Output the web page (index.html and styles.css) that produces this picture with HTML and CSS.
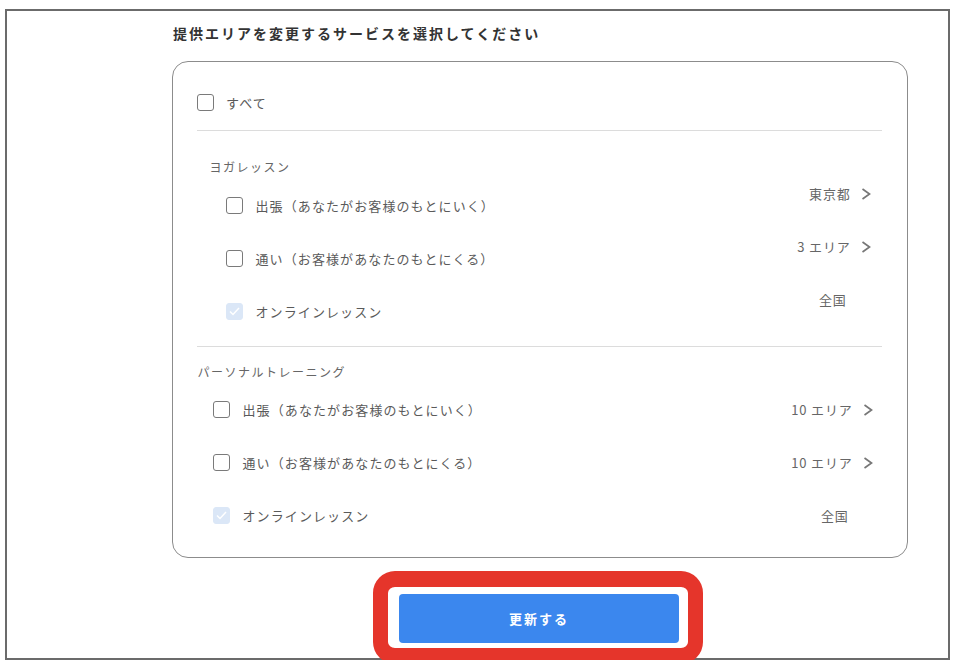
FILE: index.html
```html
<!DOCTYPE html>
<html lang="ja">
<head>
<meta charset="utf-8">
<title>提供エリア変更</title>
<link rel="stylesheet" href="styles.css">
</head>
<body>
<div class="frame">
  <h1 class="title">提供エリアを変更するサービスを選択してください</h1>
  <div class="card">
    <div class="all-row">
      <span class="cb"></span>
      <span class="label">すべて</span>
    </div>
    <div class="divider"></div>

    <section class="group group-yoga">
      <h2 class="group-title">ヨガレッスン</h2>
      <div class="row">
        <span class="cb"></span>
        <span class="label">出張（あなたがお客様のもとにいく）</span>
        <span class="val val-top">東京都<svg class="chev" width="10" height="14" viewBox="0 0 10 14"><polyline points="1.5,2 8.5,7 1.5,12" fill="none" stroke="#777" stroke-width="1.7"/></svg></span>
      </div>
      <div class="row">
        <span class="cb"></span>
        <span class="label">通い（お客様があなたのもとにくる）</span>
        <span class="val val-top">3 エリア<svg class="chev" width="10" height="14" viewBox="0 0 10 14"><polyline points="1.5,2 8.5,7 1.5,12" fill="none" stroke="#777" stroke-width="1.7"/></svg></span>
      </div>
      <div class="row">
        <span class="cb cb-disabled"><svg width="11" height="9" viewBox="0 0 11 9"><polyline points="1,4.5 4,7.5 10,1" fill="none" stroke="#fff" stroke-width="1.5"/></svg></span>
        <span class="label">オンラインレッスン</span>
        <span class="val val-top">全国<span class="chev-space"></span></span>
      </div>
    </section>
    <div class="divider divider-2"></div>

    <section class="group group-pt">
      <h2 class="group-title">パーソナルトレーニング</h2>
      <div class="row">
        <span class="cb"></span>
        <span class="label">出張（あなたがお客様のもとにいく）</span>
        <span class="val">10 エリア<svg class="chev" width="10" height="14" viewBox="0 0 10 14"><polyline points="1.5,2 8.5,7 1.5,12" fill="none" stroke="#777" stroke-width="1.7"/></svg></span>
      </div>
      <div class="row">
        <span class="cb"></span>
        <span class="label">通い（お客様があなたのもとにくる）</span>
        <span class="val">10 エリア<svg class="chev" width="10" height="14" viewBox="0 0 10 14"><polyline points="1.5,2 8.5,7 1.5,12" fill="none" stroke="#777" stroke-width="1.7"/></svg></span>
      </div>
      <div class="row">
        <span class="cb cb-disabled"><svg width="11" height="9" viewBox="0 0 11 9"><polyline points="1,4.5 4,7.5 10,1" fill="none" stroke="#fff" stroke-width="1.5"/></svg></span>
        <span class="label">オンラインレッスン</span>
        <span class="val">全国<span class="chev-space"></span></span>
      </div>
    </section>
  </div>

  <div class="actions">
    <div class="highlight">
      <button class="btn" type="button">更新する</button>
    </div>
  </div>
</div>
</body>
</html>
```

FILE: styles.css
```css
* { box-sizing: border-box; }

html, body {
  margin: 0;
  padding: 0;
  background: #fff;
}

body {
  font-family: "Noto Sans CJK JP", "Noto Sans", sans-serif;
  color: #555;
}

.frame {
  margin: 9px 0 0 5px;
  width: 945px;
  height: 651px;
  border: 2px solid #6b6b6b;
  padding: 12px 0 0 165px;
}

.title {
  margin: 0 0 18px 1px;
  font-size: 14px;
  line-height: 20px;
  font-weight: 700;
  letter-spacing: 2px;
  color: #333;
}

.card {
  width: 736px;
  border: 1.5px solid #8c8c8c;
  border-radius: 16px;
  padding: 0 25px 15px 24px;
}

.all-row {
  display: flex;
  align-items: center;
  height: 17px;
  margin-top: 32px;
  margin-bottom: 18.5px;
}

.all-row .cb { margin-right: 12px; }

.cb {
  flex: none;
  width: 17px;
  height: 17px;
  border: 1.5px solid #7a7a7a;
  border-radius: 3px;
  background: #fff;
  display: flex;
  align-items: center;
  justify-content: center;
}

.cb-disabled {
  border-color: #dbe7f7;
  background: #dbe7f7;
}

.label {
  font-size: 13px;
  line-height: 18px;
  letter-spacing: 1.1px;
  color: #5a5a5a;
}

.divider {
  height: 1px;
  background: #dcdcdc;
}

.divider-2 { margin-top: 7.5px; }

.group-title {
  margin: 0;
  font-size: 12px;
  line-height: 16px;
  font-weight: 400;
  letter-spacing: 1.5px;
  color: #666;
}

.group-yoga { padding: 28px 11.5px 0 12.5px; }
.group-yoga .group-title { margin-bottom: 4.5px; }
.group-yoga .row { padding-left: 16px; }

.group-pt { padding: 17px 9.5px 0 0.5px; }
.group-pt .group-title { margin-bottom: 3.5px; }
.group-pt .row { padding-left: 15px; }

.row {
  display: flex;
  align-items: center;
  height: 53px;
}

.row .cb { margin-right: 13px; }

.row .label { flex: 1; }

.val {
  display: flex;
  align-items: center;
  gap: 10px;
  font-size: 13px;
  line-height: 18px;
  letter-spacing: 0.8px;
  color: #666;
}

.val-top {
  align-self: flex-start;
  margin-top: 5.5px;
}

.chev { flex: none; }

.chev-space {
  width: 14px;
  height: 1px;
}

.actions {
  width: 732px;
  display: flex;
  justify-content: center;
  margin-top: 13px;
}

.highlight {
  width: 330px;
  height: 93px;
  border: 15px solid #e5352b;
  border-bottom-width: 16px;
  border-top-width: 16px;
  border-radius: 22px;
  background: #fff;
  padding: 7px 10px 0 11px;
}

.btn {
  display: block;
  width: 280px;
  height: 49px;
  border: 0;
  border-radius: 4px;
  background: #3b87ee;
  color: #fff;
  font-family: "Noto Sans CJK JP", "Noto Sans", sans-serif;
  font-size: 13px;
  font-weight: 700;
  letter-spacing: 2px;
  cursor: pointer;
}
```
